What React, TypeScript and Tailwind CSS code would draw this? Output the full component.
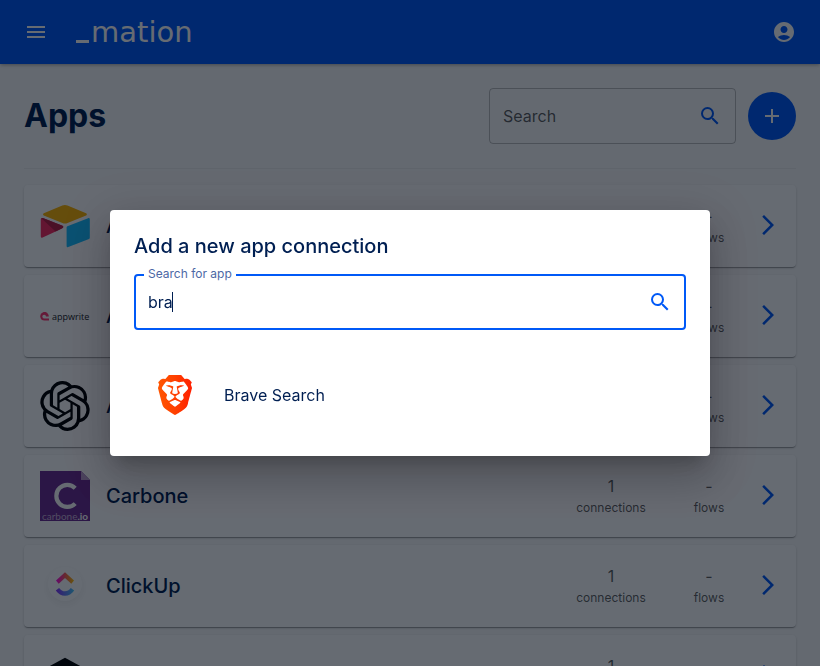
import { MdAccountCircle, MdAdd, MdMenu, MdSearch } from "react-icons/md";
import { SiBrave, SiOpenai } from "react-icons/si";

function AirtableLogo() {
  return (
    <svg viewBox="0 0 50 50" className="w-[50px] h-[50px]" aria-hidden="true">
      <path
        fill="#FCB400"
        d="M22.3 4.6 3.8 12.2c-1 .5-1 1.9 0 2.3l18.600 7.400c1.700.7 3.500.7 5.100 0l18.600-7.400c1-.4 1-1.800 0-2.300L27.500 4.600c-1.700-.7-3.500-.7-5.200 0z"
      />
      <path
        fill="#18BFFF"
        d="M26.600 26.500v18.400c0 .9.9 1.500 1.700 1.100L49 37.900c.5-.2.800-.6.800-1.100V18.300c0-.9-.9-1.500-1.700-1.100l-20.700 8.100c-.500.2-.800.6-.800 1.200z"
      />
      <path
        fill="#F82B60"
        d="m21.800 27.400-6.200 3-12.900 6.200c-.8.4-1.900-.2-1.900-1.100V18.200c0-.4.2-.7.500-.9.400-.4 1-.5 1.600-.3l19.600 7.800c1 .4 1.100 1.800.1 2.200z"
      />
      <path
        fill="#BA1E45"
        d="m21.800 27.400-6.200 3L1.300 17.300c.400-.4 1-.5 1.600-.3l19.600 7.800c1 .4 1.100 1.800.1 2.200z"
      />
    </svg>
  );
}

function AppwriteLogo() {
  return (
    <span className="w-[50px] h-[50px] flex items-center gap-[3px]" aria-hidden="true">
      <svg viewBox="0 0 18 18" className="w-[9px] h-[9px] shrink-0">
        <path
          fill="#FD366E"
          d="M18 12.800V17H9a8.500 8.500 0 1 1 7.400-12.700c.8 1.400 1.200 3 1.200 4.700h-5.500A3.700 3.700 0 1 0 9 12.800z"
        />
      </svg>
      <span className="font-['Open_Sans'] font-medium text-[9px] leading-none text-[#19191d]">
        appwrite
      </span>
    </span>
  );
}

function CarboneLogo() {
  return (
    <span
      className="relative w-[50px] h-[50px] flex items-end justify-center bg-[#6b2c91] overflow-hidden"
      aria-hidden="true"
    >
      <svg viewBox="0 0 50 50" className="absolute inset-0">
        <path fill="#fff" d="M41 0h9v9z" />
        <path fill="#b99ccb" d="M41 0v9h9z" />
        <path
          fill="none"
          stroke="#fff"
          strokeWidth="4.200"
          d="M35.200 17.200A11 11 0 1 0 35.200 32.600"
        />
      </svg>
      <span className="relative font-['Lato'] text-[10px] leading-[10px] text-[#c9b1d6]">
        carbone<span className="text-white font-bold">.io</span>
      </span>
    </span>
  );
}

function ClickUpLogo() {
  return (
    <span className="w-[50px] h-[50px] pb-1 flex items-center justify-center" aria-hidden="true">
      <span className="w-[34px] h-[34px] rounded-full bg-white shadow-[0_3px_8px_rgba(0,0,0,0.06)] flex items-center justify-center">
        <svg viewBox="0 0 20 24" className="w-5 h-6">
          <defs>
            <linearGradient id="clickup-top" x1="0" x2="1" y1="0" y2="0">
              <stop offset="0" stopColor="#FF02F0" />
              <stop offset="0.5" stopColor="#FF5B5B" />
              <stop offset="1" stopColor="#FFC800" />
            </linearGradient>
            <linearGradient id="clickup-bottom" x1="0" x2="1" y1="0" y2="0">
              <stop offset="0" stopColor="#8930FD" />
              <stop offset="1" stopColor="#49CCF9" />
            </linearGradient>
          </defs>
          <path fill="url(#clickup-top)" d="M10 .3 19 8.600l-2.700 3.200L10 6.100l-6.300 5.700L1 8.600z" />
          <path
            fill="url(#clickup-bottom)"
            d="m.8 18.500 3.300-2.600c1.800 2.300 3.700 3.400 5.900 3.400s4.100-1.100 5.800-3.300l3.400 2.500C16.700 21.900 13.700 23.800 10 23.800c-3.600 0-6.700-1.900-9.200-5.300z"
          />
        </svg>
      </span>
    </span>
  );
}

function HexagonLogo() {
  return (
    <svg viewBox="0 0 50 50" className="w-[50px] h-[50px]" aria-hidden="true">
      <path fill="#000" d="M25 6.800 42 16v18l-17 9.500L8 34V16z" />
    </svg>
  );
}

function BraveLogo() {
  return (
    <span className="w-[50px] h-[50px] flex items-center justify-center" aria-hidden="true">
      <svg className="absolute w-0 h-0">
        <defs>
          <linearGradient id="brave-fill" x1="0" x2="1" y1="0" y2="0">
            <stop offset="0" stopColor="#FF5601" />
            <stop offset="0.5" stopColor="#FF4000" />
            <stop offset="1" stopColor="#FF1F01" />
          </linearGradient>
        </defs>
      </svg>
      <SiBrave className="w-10 h-10" fill="url(#brave-fill)" />
    </span>
  );
}

const apps = [
  { name: "Airtable", logo: <AirtableLogo /> },
  { name: "Appwrite", logo: <AppwriteLogo /> },
  { name: "Azure OpenAI", logo: <SiOpenai className="w-[50px] h-[50px] text-black" /> },
  { name: "Carbone", logo: <CarboneLogo /> },
  { name: "ClickUp", logo: <ClickUpLogo /> },
  { name: "Code", logo: <HexagonLogo /> },
];

function AppRow({ name, logo }: { name: string; logo: React.ReactNode }) {
  return (
    <li>
      <a
        href="#"
        className="flex items-center gap-4 p-4 rounded bg-white shadow-[0_2px_1px_-1px_rgba(0,0,0,0.2),0_1px_1px_rgba(0,0,0,0.14),0_1px_3px_rgba(0,0,0,0.12)]"
      >
        {logo}
        <h2 className="flex-1 text-xl font-medium text-[#001F52]">{name}</h2>
        <div className="flex items-center gap-4">
          <div className="flex gap-8 text-center text-black/65">
            <div className="w-[70px]">
              <p className="text-base leading-6">1</p>
              <p className="text-xs leading-5">connections</p>
            </div>
            <div className="w-[62px]">
              <p className="text-base leading-6">-</p>
              <p className="text-xs leading-5">flows</p>
            </div>
          </div>
          <svg viewBox="0 0 24 24" className="mb-0.5 w-6 h-6" fill="#0059F7" aria-hidden="true">
            <path d="M6.230 20.230 8 22l10-10L8 2 6.230 3.770 14.460 12z" />
          </svg>
        </div>
      </a>
    </li>
  );
}

function AddConnectionDialog() {
  return (
    <div className="fixed inset-0 flex items-center justify-center bg-[#000814]/60">
      <div
        role="dialog"
        aria-labelledby="dialog-title"
        className="w-full max-w-[600px] mx-8 px-6 py-5 rounded bg-white shadow-[0_11px_15px_-7px_rgba(0,0,0,0.2),0_24px_38px_3px_rgba(0,0,0,0.14),0_9px_46px_8px_rgba(0,0,0,0.12)]"
      >
        <h2 id="dialog-title" className="text-xl leading-8 font-medium text-[#001F52]">
          Add a new app connection
        </h2>

        <div className="relative mt-3 h-14 flex items-center px-3 rounded border-2 border-[#0059F7]">
          <label
            htmlFor="search-app"
            className="absolute -top-[10px] left-2 px-1 bg-white text-xs leading-4 text-[#4d68a5]"
          >
            Search for app
          </label>
          <input
            id="search-app"
            type="text"
            defaultValue="bra"
            className="flex-1 min-w-0 text-base text-[#001F52] outline-none"
          />
          {/* Caret */}
          <span className="absolute left-9 w-px h-5 bg-[#001F52]"></span>
          <MdSearch className="w-6 h-6 text-[#0059F7]" />
        </div>

        <ul className="mt-6">
          <li>
            <button type="button" className="w-full flex items-center gap-6 p-4 text-left">
              <BraveLogo />
              <span className="text-base text-[#001F52]">Brave Search</span>
            </button>
          </li>
        </ul>
      </div>
    </div>
  );
}

export default function App() {
  return (
    <div className="h-screen overflow-hidden bg-[#fafafa] font-['Inter',sans-serif]">
      <header className="h-16 px-6 flex items-center bg-[#0059F7] text-white shadow-[0_2px_4px_-1px_rgba(0,0,0,0.2),0_1px_3px_rgba(0,0,0,0.14)]">
        <button type="button" aria-label="Open menu">
          <MdMenu className="w-6 h-6" />
        </button>
        <a href="#" className="ml-7 flex items-center gap-[2px]" aria-label="mation">
          <span className="mt-[18px] w-[13px] h-[3px] bg-white"></span>
          <span className="font-['DejaVu_Sans'] text-[29px] leading-8">mation</span>
        </a>
        <button type="button" aria-label="Account" className="ml-auto">
          <MdAccountCircle className="w-6 h-6" />
        </button>
      </header>

      <main className="p-6">
        <div className="flex items-center gap-3">
          <h1 className="flex-1 text-[32px] font-bold text-[#001F52]">Apps</h1>
          <div className="w-[247px] h-14 px-[13px] flex items-center rounded border border-black/25">
            <input
              type="text"
              aria-label="Search"
              placeholder="Search"
              className="flex-1 min-w-0 text-base outline-none placeholder:text-black/65"
            />
            <MdSearch className="w-6 h-6 text-[#0059F7]" />
          </div>
          <button
            type="button"
            aria-label="Add app connection"
            className="w-12 h-12 rounded-full flex items-center justify-center bg-[#0059F7] text-white"
          >
            <MdAdd className="w-6 h-6" />
          </button>
        </div>

        <hr className="mt-6 mb-4 border-black/5" />

        <ul className="flex flex-col gap-2">
          {apps.map((app) => (
            <AppRow key={app.name} name={app.name} logo={app.logo} />
          ))}
        </ul>
      </main>

      <AddConnectionDialog />
    </div>
  );
}
